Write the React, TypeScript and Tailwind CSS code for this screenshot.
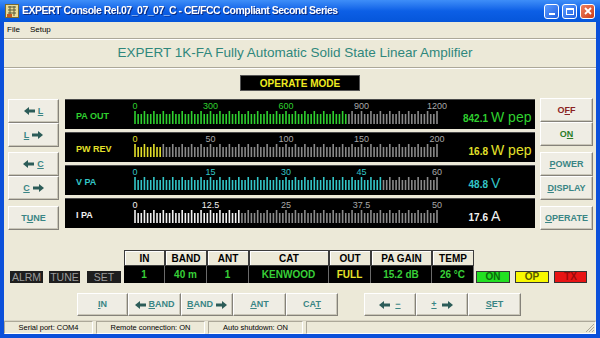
import React from "react";

const LeftArrow = () => (
  <svg width="11" height="8" viewBox="0 0 11 8" className="shrink-0 mr-[3px]">
    <path d="M0 4 L5 0 L5 2.5 L11 2.5 L11 5.5 L5 5.5 L5 8 Z" fill="#2c5c58" />
  </svg>
);

const RightArrow = () => (
  <svg width="11" height="8" viewBox="0 0 11 8" className="shrink-0 ml-[3px]">
    <path d="M11 4 L6 0 L6 2.5 L0 2.5 L0 5.5 L6 5.5 L6 8 Z" fill="#2c5c58" />
  </svg>
);

const U = ({ children }: { children: React.ReactNode }) => (
  <span className="underline underline-offset-1">{children}</span>
);

const Btn = ({ children, className }: { children: React.ReactNode; className: string }) => (
  <button
    className={`flex items-center justify-center bg-[#efede4] border border-t-white border-l-white border-b-[#85827a] border-r-[#85827a] shadow-[inset_-1px_-1px_0_#c9c6b8] text-[9px] font-bold leading-none ${className}`}
  >
    {children}
  </button>
);

const Scale = ({ color, ratio, labels }: { color: string; ratio: number; labels: string[] }) => {
  const active = Math.floor(ratio * 96 + 0.0001);
  const ticks = [];
  for (let i = 0; i < 97; i++) {
    const x = 6 + (i * 302) / 96;
    const tall = i % 3 === 0;
    ticks.push(
      <rect
        key={i}
        x={x - 0.8}
        y={tall ? 11 : 14}
        width={1.6}
        height={tall ? 13 : 10}
        fill={i <= active ? color : "#8a8a8a"}
      />
    );
  }
  return (
    <svg width="322" height="30" className="shrink-0">
      {labels.map((l, k) => (
        <text
          key={k}
          x={6 + k * 75.5}
          y="8.5"
          textAnchor="middle"
          fontSize="9"
          fontFamily="Liberation Sans, Arial, sans-serif"
          fill={k * 24 <= active ? color : "#a8a8a8"}
        >
          {l}
        </text>
      ))}
      {ticks}
    </svg>
  );
};

const meters = [
  { label: "PA OUT", color: "#2fd02f", ratio: 842.1 / 1200, labels: ["0", "300", "600", "900", "1200"], value: "842.1", unit: "W pep" },
  { label: "PW REV", color: "#e4e02a", ratio: 16.8 / 200, labels: ["0", "50", "100", "150", "200"], value: "16.8", unit: "W pep" },
  { label: "V PA", color: "#33c6c8", ratio: 48.8 / 60, labels: ["0", "15", "30", "45", "60"], value: "48.8", unit: "V" },
  { label: "I PA", color: "#f2f2f2", ratio: 17.6 / 50, labels: ["0", "12.5", "25", "37.5", "50"], value: "17.6", unit: "A" },
];

const Meter = ({ m }: { m: (typeof meters)[number] }) => (
  <div className="h-[30px] flex bg-black border-t border-[#4a4a4a]">
    <div className="w-[64px] pl-[11px] pt-[4px] flex items-center text-[9px] font-bold" style={{ color: m.color }}>
      {m.label}
    </div>
    <Scale color={m.color} ratio={m.ratio} labels={m.labels} />
    <div className="flex items-baseline self-end mb-[5px] leading-none" style={{ color: m.color }}>
      <span className="w-[37px] text-right text-[10px] font-bold">{m.value}</span>
      <span className="ml-[3px] text-[14px]">{m.unit}</span>
    </div>
  </div>
);

const headers = ["IN", "BAND", "ANT", "CAT", "OUT", "PA GAIN", "TEMP"];
const widths = ["w-[41px]", "w-[42px]", "w-[42px]", "w-[80px]", "w-[42px]", "w-[61px]", "w-[42px]"];
const values = ["1", "40 m", "1", "KENWOOD", "FULL", "15.2 dB", "26 °C"];

export default function App() {
  return (
    <div className="w-[600px] h-[338px] bg-[#0b50da] flex flex-col overflow-hidden font-['Liberation_Sans',Arial,sans-serif] select-none">
      {/* title bar */}
      <div className="h-[22px] shrink-0 flex items-center px-[5px] bg-linear-to-b from-[#3e8ef8] via-[#0c5fe6] to-[#0656da]">
        <svg width="14" height="14" viewBox="0 0 14 14" className="shrink-0">
          <rect x="0.5" y="0.5" width="13" height="13" fill="#e9dc9a" stroke="#7a6a30" />
          <path d="M3 3h8M3 6h8M3 9h8M5 2v10M9 2v10" stroke="#5a5a38" strokeWidth="1" />
          <rect x="2" y="10" width="5" height="3" fill="#c85a20" />
        </svg>
        <span className="ml-[3px] text-white font-bold text-[10.5px] tracking-[-0.5px] whitespace-nowrap drop-shadow-[1px_1px_0_#0a2a80]">
          EXPERT Console Rel.07_07_07_C - CE/FCC Compliant Second Series
        </span>
        <div className="ml-auto flex gap-[3px]">
          <div className="w-[15px] h-[15px] rounded-[3px] border border-white bg-linear-to-br from-[#5c9bff] to-[#1f5fe0] flex items-end justify-center pb-[3px]">
            <div className="w-[6px] h-[2px] bg-white" />
          </div>
          <div className="w-[15px] h-[15px] rounded-[3px] border border-white bg-linear-to-br from-[#5c9bff] to-[#1f5fe0] flex items-center justify-center">
            <div className="w-[8px] h-[7px] border border-white border-t-2" />
          </div>
          <div className="w-[15px] h-[15px] rounded-[3px] border border-white bg-linear-to-br from-[#ee8060] to-[#cc3a12] flex items-center justify-center">
            <svg width="8" height="8" viewBox="0 0 8 8">
              <path d="M1 1L7 7M7 1L1 7" stroke="white" strokeWidth="1.8" />
            </svg>
          </div>
        </div>
      </div>

      {/* client area */}
      <div className="flex-1 mx-[4px] mb-[4px] bg-[#ece9d8] flex flex-col">
        <div className="h-[16px] flex items-center gap-[10px] pl-[3px] text-[8px] text-black">
          <span>File</span>
          <span>Setup</span>
        </div>
        <div className="h-[2px] border-t border-[#aca899] border-b border-b-white" />
        <div className="h-[27px] flex items-center justify-center pr-[10px] text-[13.5px] text-[#2f877c]">
          EXPERT 1K-FA Fully Automatic Solid State Linear Amplifier
        </div>
        <div className="h-[2px] border-t border-[#aca899] border-b border-b-white" />

        <div className="mt-[6px] h-[16px] flex justify-center">
          <div className="w-[120px] bg-black text-[#f0ec20] text-[10px] font-bold flex items-center justify-center border border-[#555]">
            OPERATE MODE
          </div>
        </div>

        {/* main row */}
        <div className="mt-[7px] h-[132px] flex">
          <div className="ml-[4px] w-[51px] flex flex-col text-[#3a8585]">
            <Btn className="mt-[1px] h-[24px]"><LeftArrow /><U>L</U></Btn>
            <Btn className="h-[24px]"><U>L</U><RightArrow /></Btn>
            <Btn className="mt-[5px] h-[24px]"><LeftArrow /><U>C</U></Btn>
            <Btn className="h-[24px]"><U>C</U><RightArrow /></Btn>
            <Btn className="mt-[6px] h-[24px]"><span>T<U>U</U>NE</span></Btn>
          </div>
          <div className="ml-[6px] w-[470px] flex flex-col gap-[3px] pt-[1px]">
            {meters.map((m) => (
              <Meter key={m.label} m={m} />
            ))}
          </div>
          <div className="ml-[5px] w-[53px] flex flex-col text-[#3a8585]">
            <Btn className="h-[24px] text-[#8a2222]"><span>O<U>F</U>F</span></Btn>
            <Btn className="h-[24px] text-[#2a7d2a]"><span>O<U>N</U></span></Btn>
            <Btn className="mt-[6px] h-[24px]"><span><U>P</U>OWER</span></Btn>
            <Btn className="h-[24px]"><span><U>D</U>ISPLAY</span></Btn>
            <Btn className="mt-[6px] h-[24px]"><span><U>O</U>PERATE</span></Btn>
          </div>
        </div>

        {/* status table row */}
        <div className="mt-[20px] h-[33px] flex items-end">
          <div className="ml-[6px] flex items-end gap-[6px] text-[10.5px] text-[#9c9c9c] leading-none">
            <div className="w-[33px] h-[12px] bg-[#1e1e1e] flex items-center justify-center">ALRM</div>
            <div className="w-[31px] h-[12px] bg-[#1e1e1e] flex items-center justify-center">TUNE</div>
            <div className="ml-[1px] w-[34px] h-[12px] bg-[#1e1e1e] flex items-center justify-center">SET</div>
          </div>
          <div className="ml-[3px] flex flex-col">
            <div className="flex h-[16px]">
              {headers.map((h, i) => (
                <div
                  key={h}
                  className={`${widths[i]} flex items-center justify-center bg-[#ece9d8] border border-[#3c3c3c] shadow-[inset_1px_1px_0_#ffffff] text-[10px] font-bold text-black`}
                >
                  {h}
                </div>
              ))}
            </div>
            <div className="flex h-[17px] bg-black">
              {values.map((v, i) => (
                <div
                  key={i}
                  className={`${widths[i]} flex items-center justify-center border-r border-[#6a6a6a] text-[10px] font-bold ${i === 4 ? "text-[#e8e42a]" : "text-[#38d038]"}`}
                >
                  {v}
                </div>
              ))}
            </div>
          </div>
          <div className="ml-[2px] flex gap-[5px] text-[10px] font-bold leading-none">
            <div className="w-[34px] h-[12px] bg-[#22e022] border border-[#333] text-[#0b6a0b] flex items-center justify-center">ON</div>
            <div className="w-[34px] h-[12px] bg-[#f8f800] border border-[#333] text-[#5a5a00] flex items-center justify-center">OP</div>
            <div className="w-[33px] h-[12px] bg-[#e81414] border border-[#333] text-[#9a0a0a] flex items-center justify-center">TX</div>
          </div>
        </div>

        {/* bottom buttons */}
        <div className="mt-[10px] h-[23px] flex text-[#3a8585]">
          <div className="ml-[73px] flex">
            <Btn className="w-[51px] h-[23px]"><span><U>I</U>N</span></Btn>
            <Btn className="w-[53px] h-[23px]"><LeftArrow /><span><U>B</U>AND</span></Btn>
            <Btn className="w-[52px] h-[23px]"><span><U>B</U>AND</span><RightArrow /></Btn>
            <Btn className="w-[53px] h-[23px]"><span><U>A</U>NT</span></Btn>
            <Btn className="w-[52px] h-[23px]"><span>CA<U>T</U></span></Btn>
          </div>
          <div className="ml-[26px] flex">
            <Btn className="w-[52px] h-[23px]"><LeftArrow /><span className="ml-[2px]"><U>−</U></span></Btn>
            <Btn className="w-[52px] h-[23px]"><span className="mr-[2px]"><U>+</U></span><RightArrow /></Btn>
            <Btn className="w-[53px] h-[23px]"><span><U>S</U>ET</span></Btn>
          </div>
        </div>

        {/* status bar */}
        <div className="mt-[4px] h-[14px] flex items-stretch gap-[3px] border-t border-[#d8d4c4] text-[7.5px] text-black leading-none">
          <div className="w-[89px] flex items-center justify-center border-t border-l border-[#aca899] border-b border-b-white border-r border-r-white">
            Serial port: COM4
          </div>
          <div className="w-[109px] flex items-center justify-center border-t border-l border-[#aca899] border-b border-b-white border-r border-r-white">
            Remote connection: ON
          </div>
          <div className="w-[95px] flex items-center justify-center border-t border-l border-[#aca899] border-b border-b-white border-r border-r-white">
            Auto shutdown: ON
          </div>
          <div className="flex-1 flex items-end justify-end border-t border-l border-[#aca899] border-b border-b-white border-r border-r-white">
            <svg width="11" height="11" viewBox="0 0 11 11">
              <path d="M10 2L2 10M10 5L5 10M10 8L8 10" stroke="#aca899" strokeWidth="1" />
            </svg>
          </div>
        </div>
      </div>
    </div>
  );
}
